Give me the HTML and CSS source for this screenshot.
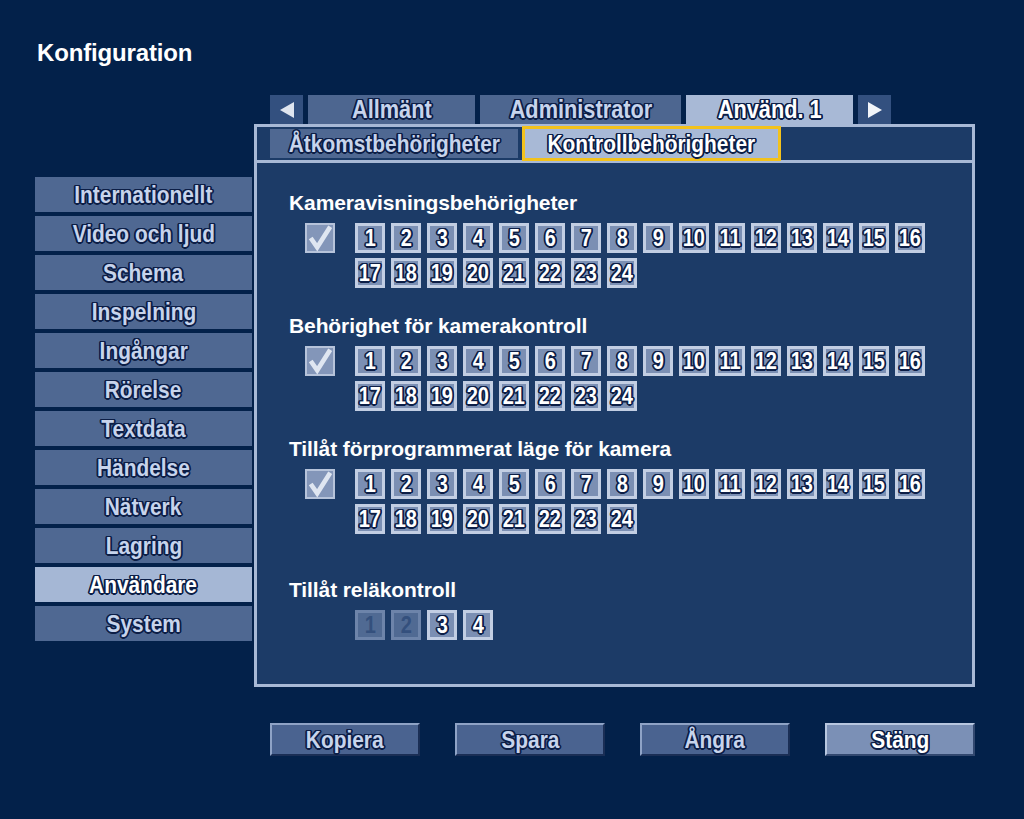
FILE: index.html
```html
<!DOCTYPE html>
<html lang="sv">
<head>
<meta charset="utf-8">
<title>Konfiguration</title>
<link rel="stylesheet" href="styles.css">
</head>
<body>
<div class="screen">
  <h1 class="title">Konfiguration</h1>
  <div class="main">
    <nav class="menu">
      <div class="menu-item"><span class="txt">Internationellt</span></div>
      <div class="menu-item"><span class="txt">Video och ljud</span></div>
      <div class="menu-item"><span class="txt">Schema</span></div>
      <div class="menu-item"><span class="txt">Inspelning</span></div>
      <div class="menu-item"><span class="txt">Ingångar</span></div>
      <div class="menu-item"><span class="txt">Rörelse</span></div>
      <div class="menu-item"><span class="txt">Textdata</span></div>
      <div class="menu-item"><span class="txt">Händelse</span></div>
      <div class="menu-item"><span class="txt">Nätverk</span></div>
      <div class="menu-item"><span class="txt">Lagring</span></div>
      <div class="menu-item menu-item--active"><span class="txt">Användare</span></div>
      <div class="menu-item"><span class="txt">System</span></div>
    </nav>
    <div class="content">
      <div class="tabs">
        <div class="tab tab--arrow"><svg width="16" height="18" viewBox="0 0 16 18"><polygon points="15,1 15,17 1,9" fill="#dfe5ef"/></svg></div>
        <div class="tab tab--w1"><span class="txt">Allmänt</span></div>
        <div class="tab tab--w2"><span class="txt">Administrator</span></div>
        <div class="tab tab--w1 tab--active"><span class="txt">Använd. 1</span></div>
        <div class="tab tab--arrow"><svg width="16" height="18" viewBox="0 0 16 18"><polygon points="1,1 1,17 15,9" fill="#f2f5fa"/></svg></div>
      </div>
      <div class="panel">
        <div class="subtabs">
          <div class="subtab subtab--a"><span class="txt">Åtkomstbehörigheter</span></div>
          <div class="subtab subtab--b subtab--active"><span class="txt">Kontrollbehörigheter</span></div>
        </div>
        <div class="panel-body">
          <section class="perm">
            <h2 class="perm-title">Kameravisningsbehörigheter</h2>
            <div class="perm-row">
              <span class="check"><svg width="28" height="28" viewBox="0 0 28 28"><path d="M4 14 L11 24 L25 2" fill="none" stroke="#dfe6f1" stroke-width="5" stroke-linejoin="miter"/></svg></span>
              <div class="cams">
                <span class="cam"><span class="txt">1</span></span><span class="cam"><span class="txt">2</span></span><span class="cam"><span class="txt">3</span></span><span class="cam"><span class="txt">4</span></span><span class="cam"><span class="txt">5</span></span><span class="cam"><span class="txt">6</span></span><span class="cam"><span class="txt">7</span></span><span class="cam"><span class="txt">8</span></span><span class="cam"><span class="txt">9</span></span><span class="cam"><span class="txt">10</span></span><span class="cam"><span class="txt">11</span></span><span class="cam"><span class="txt">12</span></span><span class="cam"><span class="txt">13</span></span><span class="cam"><span class="txt">14</span></span><span class="cam"><span class="txt">15</span></span><span class="cam"><span class="txt">16</span></span>
                <span class="cam"><span class="txt">17</span></span><span class="cam"><span class="txt">18</span></span><span class="cam"><span class="txt">19</span></span><span class="cam"><span class="txt">20</span></span><span class="cam"><span class="txt">21</span></span><span class="cam"><span class="txt">22</span></span><span class="cam"><span class="txt">23</span></span><span class="cam"><span class="txt">24</span></span>
              </div>
            </div>
          </section>
          <section class="perm">
            <h2 class="perm-title">Behörighet för kamerakontroll</h2>
            <div class="perm-row">
              <span class="check"><svg width="28" height="28" viewBox="0 0 28 28"><path d="M4 14 L11 24 L25 2" fill="none" stroke="#dfe6f1" stroke-width="5" stroke-linejoin="miter"/></svg></span>
              <div class="cams">
                <span class="cam"><span class="txt">1</span></span><span class="cam"><span class="txt">2</span></span><span class="cam"><span class="txt">3</span></span><span class="cam"><span class="txt">4</span></span><span class="cam"><span class="txt">5</span></span><span class="cam"><span class="txt">6</span></span><span class="cam"><span class="txt">7</span></span><span class="cam"><span class="txt">8</span></span><span class="cam"><span class="txt">9</span></span><span class="cam"><span class="txt">10</span></span><span class="cam"><span class="txt">11</span></span><span class="cam"><span class="txt">12</span></span><span class="cam"><span class="txt">13</span></span><span class="cam"><span class="txt">14</span></span><span class="cam"><span class="txt">15</span></span><span class="cam"><span class="txt">16</span></span>
                <span class="cam"><span class="txt">17</span></span><span class="cam"><span class="txt">18</span></span><span class="cam"><span class="txt">19</span></span><span class="cam"><span class="txt">20</span></span><span class="cam"><span class="txt">21</span></span><span class="cam"><span class="txt">22</span></span><span class="cam"><span class="txt">23</span></span><span class="cam"><span class="txt">24</span></span>
              </div>
            </div>
          </section>
          <section class="perm">
            <h2 class="perm-title">Tillåt förprogrammerat läge för kamera</h2>
            <div class="perm-row">
              <span class="check"><svg width="28" height="28" viewBox="0 0 28 28"><path d="M4 14 L11 24 L25 2" fill="none" stroke="#dfe6f1" stroke-width="5" stroke-linejoin="miter"/></svg></span>
              <div class="cams">
                <span class="cam"><span class="txt">1</span></span><span class="cam"><span class="txt">2</span></span><span class="cam"><span class="txt">3</span></span><span class="cam"><span class="txt">4</span></span><span class="cam"><span class="txt">5</span></span><span class="cam"><span class="txt">6</span></span><span class="cam"><span class="txt">7</span></span><span class="cam"><span class="txt">8</span></span><span class="cam"><span class="txt">9</span></span><span class="cam"><span class="txt">10</span></span><span class="cam"><span class="txt">11</span></span><span class="cam"><span class="txt">12</span></span><span class="cam"><span class="txt">13</span></span><span class="cam"><span class="txt">14</span></span><span class="cam"><span class="txt">15</span></span><span class="cam"><span class="txt">16</span></span>
                <span class="cam"><span class="txt">17</span></span><span class="cam"><span class="txt">18</span></span><span class="cam"><span class="txt">19</span></span><span class="cam"><span class="txt">20</span></span><span class="cam"><span class="txt">21</span></span><span class="cam"><span class="txt">22</span></span><span class="cam"><span class="txt">23</span></span><span class="cam"><span class="txt">24</span></span>
              </div>
            </div>
          </section>
          <section class="perm perm--relay">
            <h2 class="perm-title">Tillåt reläkontroll</h2>
            <div class="perm-row perm-row--nocheck">
              <div class="cams">
                <span class="cam cam--off"><span class="txt">1</span></span><span class="cam cam--off"><span class="txt">2</span></span><span class="cam"><span class="txt">3</span></span><span class="cam"><span class="txt">4</span></span>
              </div>
            </div>
          </section>
        </div>
      </div>
      <div class="buttons">
        <div class="btn"><span class="txt">Kopiera</span></div>
        <div class="btn"><span class="txt">Spara</span></div>
        <div class="btn"><span class="txt">Ångra</span></div>
        <div class="btn btn--active"><span class="txt">Stäng</span></div>
      </div>
    </div>
  </div>
</div>
</body>
</html>
```

FILE: styles.css
```css
html, body {
  margin: 0;
  padding: 0;
  background: #03214a;
}
.screen {
  width: 1024px;
  height: 819px;
  background: #03214a;
  overflow: hidden;
  font-family: "Liberation Sans", Arial, sans-serif;
}
.title {
  margin: 0;
  padding: 38px 0 0 37px;
  height: 95px;
  box-sizing: border-box;
  font-size: 24px;
  line-height: 30px;
  font-weight: bold;
  color: #ffffff;
  letter-spacing: -0.15px;
}
.main {
  display: flex;
  padding-left: 35px;
}
.menu-item, .tab, .subtab, .cam, .btn {
  font-family: "Liberation Sans", Arial, sans-serif;
  font-weight: bold;
  color: #c7d4ec;
  font-size: 24px;
  text-shadow:
    -1px -1px 0 #0c1e46, 0 -1px 0 #0c1e46, 1px -1px 0 #0c1e46,
    -1px 0 0 #0c1e46, 1px 0 0 #0c1e46,
    -1px 1px 0 #0c1e46, 0 1px 0 #0c1e46, 1px 1px 0 #0c1e46,
    -2px 0 0 #0c1e46, 2px 0 0 #0c1e46,
    0 -1.5px 0 #0c1e46, 0 1.5px 0 #0c1e46,
    -1.5px -1px 0 #0c1e46, 1.5px 1px 0 #0c1e46,
    -1.5px 1px 0 #0c1e46, 1.5px -1px 0 #0c1e46;
}
.txt {
  display: inline-block;
  white-space: nowrap;
  transform: scaleX(0.87);
  line-height: 1;
}
.menu {
  display: flex;
  flex-direction: column;
  gap: 4px;
  width: 217px;
  margin-top: 82px;
}
.menu-item {
  height: 35px;
  background: #4f6892;
  display: flex;
  align-items: center;
  justify-content: center;
  font-size: 24px;
}
.menu-item--active {
  background: #a5b7d5;
  color: #ffffff;
}
.content {
  margin-left: 2px;
  width: 721px;
}
.tabs {
  display: flex;
  gap: 5px;
  padding-left: 16px;
  height: 29px;
}
.tab {
  height: 29px;
  display: flex;
  align-items: center;
  justify-content: center;
  background: #4d6690;
  font-size: 25px;
}
.tab--arrow {
  width: 33px;
  background: #33507f;
}
.tab--w1 { width: 167px; }
.tab--w2 { width: 201px; }
.tab--active {
  background: #a8b9d6;
  color: #ffffff;
}
.panel {
  height: 563px;
  box-sizing: border-box;
  border: 3px solid #a8b9d6;
  background: #1c3b67;
}
.subtabs {
  display: flex;
  gap: 7px;
  padding: 2px 0 0 13px;
  height: 31px;
  border-bottom: 3px solid #a8b9d6;
}
.subtab {
  height: 29px;
  display: flex;
  align-items: center;
  justify-content: center;
  background: #4f6892;
  font-size: 24px;
}
.subtab--a { width: 248px; }
.subtab--b { width: 253px; }
.subtab--active {
  background: #a8b9d6;
  color: #ffffff;
  box-shadow: 0 0 0 3px #f3c21c;
  position: relative;
}
.panel-body {
  padding: 28px 0 0 32px;
}
.perm {
  margin-bottom: 26px;
}
.perm:nth-child(3) {
  margin-bottom: 44px;
}
.perm-title {
  margin: 0;
  height: 24px;
  font-size: 21px;
  line-height: 24px;
  font-weight: bold;
  color: #ffffff;
  font-family: "Liberation Sans", Arial, sans-serif;
  letter-spacing: -0.1px;
}
.perm-row {
  display: flex;
  align-items: flex-start;
  margin-top: 8px;
  padding-left: 16px;
}
.perm-row--nocheck {
  padding-left: 66px;
}
.check {
  width: 30px;
  height: 30px;
  box-sizing: border-box;
  border: 2px solid #b6c3da;
  background: #8396b9;
  display: flex;
  align-items: center;
  justify-content: center;
  margin-right: 20px;
}
.cams {
  display: grid;
  grid-template-columns: repeat(16, 30px);
  column-gap: 6px;
  row-gap: 5px;
}
.cam {
  width: 30px;
  height: 30px;
  box-sizing: border-box;
  border: 3px solid #c2cee3;
  background: #7b8fb3;
  display: flex;
  align-items: center;
  justify-content: center;
  font-size: 23px;
  color: #ffffff;
}
.cam--off {
  background: #506a93;
  border-color: #6d84aa;
  color: #34507d;
  text-shadow: none;
}
.buttons {
  display: flex;
  gap: 35px;
  padding-left: 16px;
  margin-top: 36px;
}
.btn {
  width: 150px;
  height: 33px;
  box-sizing: border-box;
  border: 2px solid;
  border-color: #8fa3c6 #1a2e55 #1a2e55 #8fa3c6;
  background: #4a6390;
  display: flex;
  align-items: center;
  justify-content: center;
  font-size: 24px;
}
.btn--active {
  background: #7b90b6;
  border-color: #b8c7e0 #32486f #32486f #b8c7e0;
  color: #ffffff;
}
```
